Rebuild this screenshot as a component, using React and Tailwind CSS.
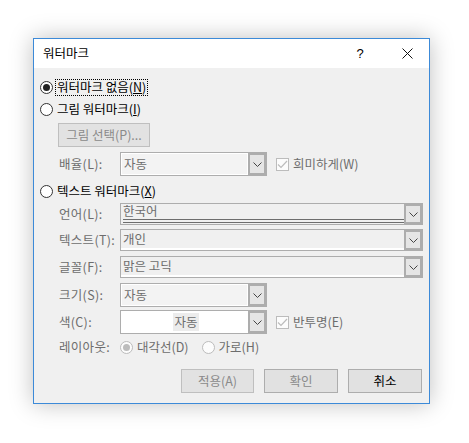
import React from "react";

const FONT = { fontFamily: '"Noto Sans CJK KR", "Noto Sans", sans-serif' };

function Chevron() {
  return (
    <svg width="9" height="5" viewBox="0 0 9 5">
      <polyline points="0.5,0.5 4.5,4.5 8.5,0.5" fill="none" stroke="#444" strokeWidth="1" />
    </svg>
  );
}

function DropBtn() {
  return (
    <div className="flex h-full w-[18px] shrink-0 items-center justify-center border-2 border-[#adadad] bg-[#e5e5e5]">
      <Chevron />
    </div>
  );
}

function Radio({ checked, disabled }) {
  return (
    <div
      className={
        "flex h-[13px] w-[13px] shrink-0 items-center justify-center rounded-full border " +
        (disabled ? "border-[#bcbcbc] bg-[#fcfcfc]" : "border-[#333333] bg-white")
      }
    >
      {checked && (
        <div className={"h-[7px] w-[7px] rounded-full " + (disabled ? "bg-[#bcbcbc]" : "bg-[#222222]")} />
      )}
    </div>
  );
}

function Check() {
  return (
    <div className="flex h-[13px] w-[13px] shrink-0 items-center justify-center border border-[#bcbcbc] bg-[#fcfcfc]">
      <svg width="11" height="9" viewBox="0 0 11 9">
        <polyline points="1,4.5 4,7.5 10,1" fill="none" stroke="#bcbcbc" strokeWidth="1.2" />
      </svg>
    </div>
  );
}

function Label({ children }) {
  return <div className="w-[86px] shrink-0 whitespace-nowrap pl-[25px] tracking-[0.3px] text-[#6d6d6d]">{children}</div>;
}

export default function App() {
  return (
    <div className="min-h-[443px] w-[469px] bg-white pl-[33px] pt-[38px] text-[12.5px] leading-none" style={FONT}>
      <div className="flex h-[366px] w-[397px] flex-col border border-[#3c8ad8] bg-[#f0f0f0] shadow-[0_0_22px_rgba(0,0,0,0.25)]">
        {/* Title bar */}
        <div className="flex h-[29px] shrink-0 items-center bg-white pl-[9px] text-black">
          <div className="flex-1">워터마크</div>
          <div className="w-[46px] text-center text-[13px]" style={{ fontFamily: '"Liberation Sans", sans-serif' }}>?</div>
          <div className="flex w-[46px] items-center justify-center pl-[2px]">
            <svg width="11" height="11" viewBox="0 0 11 11">
              <path d="M0.5 0.5 L10.5 10.5 M10.5 0.5 L0.5 10.5" stroke="#111" strokeWidth="1" />
            </svg>
          </div>
        </div>

        {/* Body */}
        <div className="flex flex-1 flex-col whitespace-nowrap">
          {/* Radio 1 */}
          <div className="mt-[10px] flex h-[18px] items-center pl-[6px]">
            <Radio checked />
            <div className="ml-[2px] flex h-[17px] items-center border border-dotted border-black px-[1px] text-black">
              워터마크 없음(<span className="underline">N</span>)
            </div>
          </div>
          {/* Radio 2 */}
          <div className="mt-[4px] flex h-[18px] items-center pl-[6px]">
            <Radio />
            <div className="ml-[4px] text-black">
              그림 워터마크(<span className="underline">I</span>)
            </div>
          </div>
          {/* Picture button */}
          <div className="mt-[5px] flex pl-[24px]">
            <div className="flex h-[24px] w-[92px] items-center justify-center border border-[#bfbfbf] bg-[#e2e2e2] text-[#8a8a8a]">
              그림 선택(P)...
            </div>
          </div>
          {/* Scale */}
          <div className="mt-[5px] flex h-[24px] items-center">
            <Label>배율(L):</Label>
            <div className="flex h-full w-[147px] border border-[#adadad] bg-white">
              <div className="flex flex-1 items-center border border-white bg-[#f3f3f3] pl-[2px] text-[#6d6d6d]">자동</div>
              <DropBtn />
            </div>
            <div className="ml-[9px] flex items-center">
              <Check />
              <div className="ml-[4px] text-[#6d6d6d]">희미하게(W)</div>
            </div>
          </div>
          {/* Radio 3 */}
          <div className="mt-[6px] flex h-[18px] items-center pl-[6px]">
            <Radio />
            <div className="ml-[4px] text-black">
              텍스트 워터마크(<span className="underline">X</span>)
            </div>
          </div>
          {/* Language */}
          <div className="mt-[3px] flex h-[22px] items-center">
            <Label>언어(L):</Label>
            <div className="flex h-full w-[303px] border border-[#adadad] bg-[#f0f0f0]">
              <div className="flex flex-1 flex-col pl-[2px]">
                <div className="flex flex-1 items-center text-[#6d6d6d]">한국어</div>
                <div className="mb-[1px] h-[4px] border-y border-[#6d6d6d]" />
              </div>
              <DropBtn />
            </div>
          </div>
          {/* Text */}
          <div className="mt-[4px] flex h-[22px] items-center">
            <Label>텍스트(T):</Label>
            <div className="flex h-full w-[303px] border border-[#adadad] bg-[#f0f0f0]">
              <div className="flex flex-1 items-center border-b-2 border-white pl-[2px] text-[#6d6d6d]">개인</div>
              <DropBtn />
            </div>
          </div>
          {/* Font */}
          <div className="mt-[5px] flex h-[22px] items-center">
            <Label>글꼴(F):</Label>
            <div className="flex h-full w-[303px] border border-[#adadad] bg-[#f0f0f0]">
              <div className="flex flex-1 items-center border-b-2 border-white pl-[2px] text-[#6d6d6d]">맑은 고딕</div>
              <DropBtn />
            </div>
          </div>
          {/* Size */}
          <div className="mt-[5px] flex h-[24px] items-center">
            <Label>크기(S):</Label>
            <div className="flex h-full w-[147px] border border-[#adadad] bg-white">
              <div className="flex flex-1 items-center border border-white bg-[#f3f3f3] pl-[2px] text-[#6d6d6d]">자동</div>
              <DropBtn />
            </div>
          </div>
          {/* Color */}
          <div className="mt-[3px] flex h-[24px] items-center">
            <Label>색(C):</Label>
            <div className="flex h-full w-[147px] border border-[#adadad] bg-white">
              <div className="flex flex-1 items-center justify-center pl-[3px]">
                <span className="bg-[#ececec] px-[1px] py-[3px] text-[#6d6d6d]">자동</span>
              </div>
              <DropBtn />
            </div>
            <div className="ml-[9px] flex items-center">
              <Check />
              <div className="ml-[4px] text-[#6d6d6d]">반투명(E)</div>
            </div>
          </div>
          {/* Layout */}
          <div className="mt-[4px] flex h-[18px] items-center">
            <Label>레이아웃:</Label>
            <div className="flex items-center">
              <Radio checked disabled />
              <div className="ml-[4px] text-[#6d6d6d]">대각선(D)</div>
            </div>
            <div className="ml-[13px] flex items-center">
              <Radio disabled />
              <div className="ml-[4px] text-[#6d6d6d]">가로(H)</div>
            </div>
          </div>
          {/* Buttons */}
          <div className="mt-[13px] flex h-[24px] pl-[147px]">
            <div className="flex h-full w-[73px] items-center justify-center border border-[#bfbfbf] bg-[#e2e2e2] text-[#8a8a8a]">적용(A)</div>
            <div className="ml-[10px] flex h-full w-[74px] items-center justify-center border border-[#adadad] bg-[#e1e1e1] text-[#8a8a8a]">확인</div>
            <div className="ml-[10px] flex h-full w-[74px] items-center justify-center border border-[#adadad] bg-[#e1e1e1] text-black">취소</div>
          </div>
        </div>
      </div>
    </div>
  );
}
